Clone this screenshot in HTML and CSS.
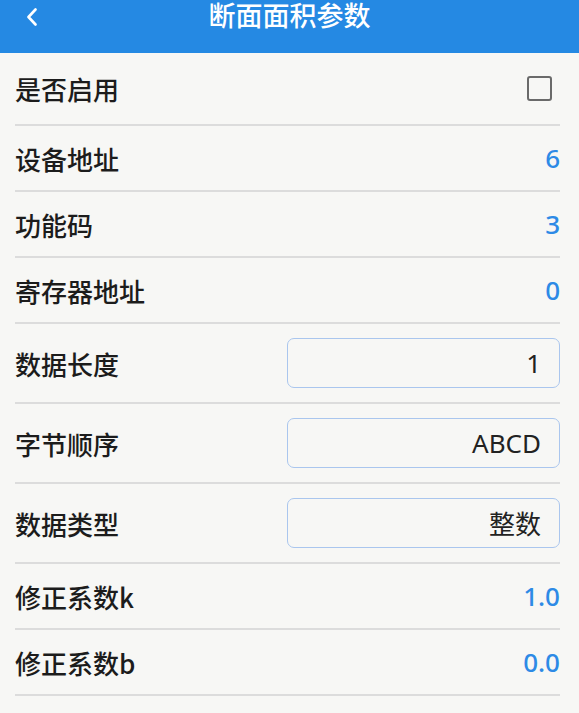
FILE: index.html
```html
<!DOCTYPE html>
<html lang="zh">
<head>
<meta charset="utf-8">
<title>断面面积参数</title>
<link rel="stylesheet" href="styles.css">
</head>
<body>
<header class="topbar">
  <span class="back">
    <svg width="12" height="18" viewBox="0 0 12 18"><path d="M9.5 1.5 L2.5 9 L9.5 16.5" fill="none" stroke="#fff" stroke-width="2.6" stroke-linecap="round" stroke-linejoin="round"/></svg>
  </span>
  <h1 class="title">断面面积参数</h1>
</header>
<main class="list">
  <div class="row row-first">
    <span class="label">是否启用</span>
    <span class="checkbox"></span>
  </div>
  <div class="row">
    <span class="label">设备地址</span>
    <span class="value">6</span>
  </div>
  <div class="row">
    <span class="label">功能码</span>
    <span class="value">3</span>
  </div>
  <div class="row">
    <span class="label">寄存器地址</span>
    <span class="value">0</span>
  </div>
  <div class="row row-input">
    <span class="label">数据长度</span>
    <span class="field">1</span>
  </div>
  <div class="row row-input">
    <span class="label">字节顺序</span>
    <span class="field">ABCD</span>
  </div>
  <div class="row row-input">
    <span class="label">数据类型</span>
    <span class="field">整数</span>
  </div>
  <div class="row">
    <span class="label">修正系数k</span>
    <span class="value">1.0</span>
  </div>
  <div class="row">
    <span class="label">修正系数b</span>
    <span class="value">0.0</span>
  </div>
</main>
</body>
</html>
```
FILE: styles.css
```css
html, body {
  margin: 0;
  padding: 0;
  background: #f7f7f5;
  font-family: "Noto Sans", "Noto Sans CJK SC", sans-serif;
}

.topbar {
  height: 53px;
  background: #2589e3;
  display: flex;
  align-items: flex-start;
  justify-content: center;
  position: relative;
}

.back {
  position: absolute;
  left: 26px;
  top: 8px;
  width: 12px;
  height: 18px;
  display: block;
}
.back svg { display: block; }

.title {
  margin: 0;
  padding-top: 1px;
  color: #fff;
  font-size: 27px;
  font-weight: 500;
  line-height: 28px;
  font-family: "Noto Sans CJK SC", sans-serif;
}

.list {
  padding: 0 19px 0 15px;
}

.row {
  height: 64px;
  display: flex;
  align-items: center;
  justify-content: space-between;
  border-bottom: 2px solid #dcdcdc;
}

.row-first {
  height: 71px;
}

.row-input {
  height: 78px;
}

.label {
  font-size: 26px;
  color: #1c1c1c;
  font-family: "Noto Sans CJK SC", sans-serif;
  font-weight: 500;
}

.value {
  font-size: 26px;
  font-weight: 500;
  color: #2d8ae6;
  font-family: "Noto Sans", sans-serif;
}

.checkbox {
  width: 21px;
  height: 21px;
  border: 2px solid #6a6a6a;
  border-radius: 3px;
  margin-right: 8px;
  box-sizing: content-box;
}

.field {
  width: 273px;
  height: 50px;
  box-sizing: border-box;
  border: 1.5px solid #aac6ee;
  border-radius: 7px;
  display: flex;
  align-items: center;
  justify-content: flex-end;
  padding-right: 18px;
  font-size: 26px;
  color: #222;
  font-family: "Noto Sans", "Noto Sans CJK SC", sans-serif;
}
```
